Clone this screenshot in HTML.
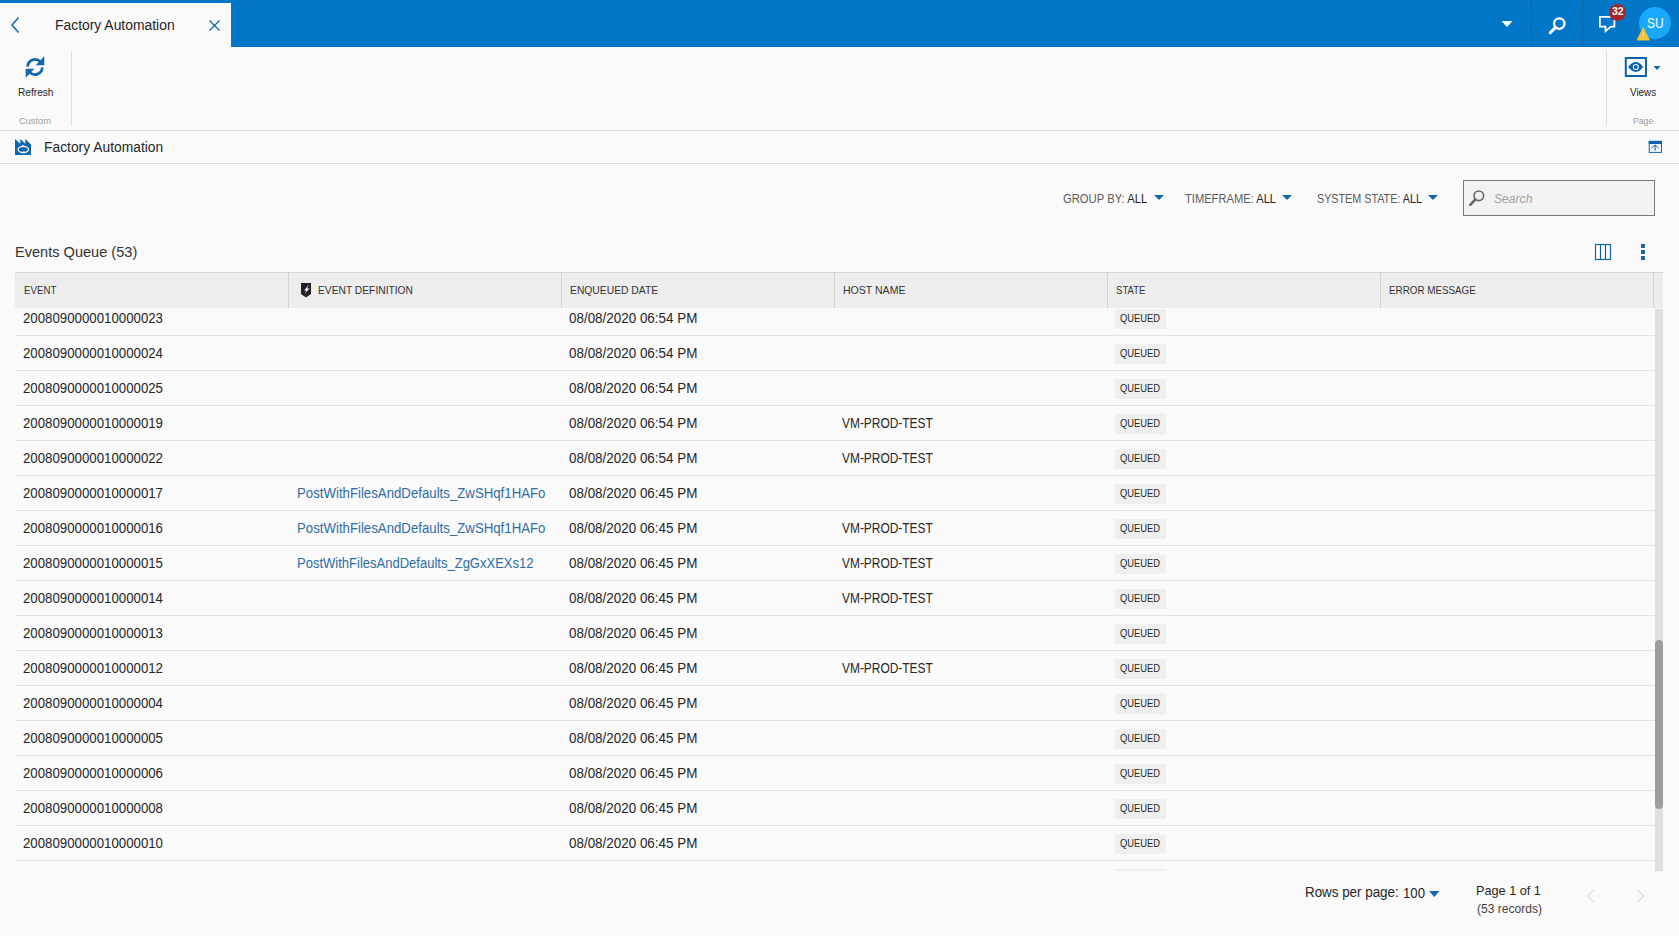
<!DOCTYPE html>
<html><head><meta charset="utf-8"><style>
*{margin:0;padding:0;box-sizing:border-box}
html,body{width:1679px;height:936px;overflow:hidden;background:#fafafa;font-family:"Liberation Sans",sans-serif;color:#222}
.t{position:absolute;line-height:1;white-space:pre;transform-origin:0 0}
.a{position:absolute}
.badge{position:absolute;width:51.4px;height:20px;background:#efefef}
.rl{position:absolute;left:0;width:1640px;height:1px;background:#e3e3e3}
.hdiv{position:absolute;top:273px;width:1px;height:35px;background:#d2d2d2}
</style></head><body>
<!-- top blue bar -->
<div class="a" style="left:0;top:0;width:1679px;height:47px;background:#0277c8"></div>
<div class="a" style="left:0;top:3px;width:231px;height:44px;background:#fafafa"></div>
<svg class="a" style="left:10px;top:16px" width="12" height="18" viewBox="0 0 12 18"><path d="M8.5 1.5 L2 9 L8.5 16.5" fill="none" stroke="#0f67b1" stroke-width="1.5"/></svg>
<svg class="a" style="left:208px;top:19px" width="13" height="13" viewBox="0 0 13 13"><path d="M1.5 1.5 L11.5 11.5 M11.5 1.5 L1.5 11.5" fill="none" stroke="#0f67b1" stroke-width="1.3"/></svg>
<!-- header right icons -->
<svg class="a" style="left:1501px;top:20px" width="12" height="8" viewBox="0 0 12 8"><path d="M0.5 1 L11.5 1 L6 7 Z" fill="#fff"/></svg>
<div class="a" style="left:1531px;top:0;width:0;height:47px;border-left:1px dashed #0b5d9e"></div>
<div class="a" style="left:1582px;top:0;width:0;height:47px;border-left:1px dashed #0b5d9e"></div>
<svg class="a" style="left:1547px;top:15.5px" width="20" height="20" viewBox="0 0 20 20"><circle cx="12.3" cy="7.6" r="5.2" fill="none" stroke="#fff" stroke-width="2.3"/><path d="M8.6 11.4 L3.2 16.8" stroke="#fff" stroke-width="3" stroke-linecap="round"/></svg>
<svg class="a" style="left:1598px;top:15px" width="20" height="20" viewBox="0 0 20 20"><path d="M1.9 1.9 H16.4 V11.6 H13 L7.5 16.2 V11.6 H1.9 Z" fill="none" stroke="#fff" stroke-width="1.75" stroke-linejoin="miter"/></svg>
<div class="a" style="left:1609px;top:3.5px;width:17px;height:17px;border-radius:50%;background:#a3262a"></div>
<div class="t" style="left:1611.60px;top:6.00px;font-size:10.5px;color:#ffffff;font-weight:bold;transform:scaleX(0.9967);">32</div>
<div class="a" style="left:1639px;top:6.8px;width:31.8px;height:32px;border-radius:50%;background:#18a8fc"></div>
<svg class="a" style="left:1636px;top:27px" width="15" height="14" viewBox="0 0 15 14"><path d="M7.25 1.2 L13 12.9 H1.5 Z" fill="#f5c330" stroke="#f5c330" stroke-width="1.3" stroke-linejoin="round"/><path d="M7.25 5.3 V9.6" stroke="#dfe6ee" stroke-width="1.1"/><rect x="6.7" y="10.6" width="1.1" height="1.2" fill="#dfe6ee"/></svg>

<!-- ribbon -->
<svg class="a" style="left:25px;top:56px" width="20" height="22" viewBox="0 0 20 22"><g fill="none" stroke="#1467ad" stroke-width="2.7"><path d="M2.7 10.6 A7.3 7.3 0 0 1 15.6 6.1"/><path d="M17.3 11.4 A7.3 7.3 0 0 1 4.4 15.9"/></g><path d="M19.3 0.2 V9.3 H10.6 Z" fill="#1467ad"/><path d="M0.7 21.8 V12.7 H9.4 Z" fill="#1467ad"/></svg>
<div class="a" style="left:71px;top:51px;width:1px;height:75px;background:#e0e0e0"></div>
<div class="a" style="left:1606px;top:51px;width:1px;height:75px;background:#e0e0e0"></div>
<svg class="a" style="left:1624px;top:57px" width="24" height="20" viewBox="0 0 24 20"><rect x="1.8" y="1" width="20.2" height="18" fill="none" stroke="#0d62ab" stroke-width="2"/><path d="M4.2 10 Q11.8 0.2 19.2 10 Q11.8 19.8 4.2 10 Z" fill="#0d62ab"/><circle cx="11.8" cy="10" r="3" fill="#fafafa"/><circle cx="11.8" cy="10" r="2" fill="#0d62ab"/></svg>
<svg class="a" style="left:1653px;top:65px" width="8" height="6" viewBox="0 0 8 6"><path d="M0.5 1 H7.5 L4 5 Z" fill="#1467ad"/></svg>
<div class="a" style="left:0;top:130px;width:1679px;height:1px;background:#dcdcdc"></div>
<!-- breadcrumb -->
<svg class="a" style="left:15px;top:139px" width="16" height="16" viewBox="0 0 16 16"><path d="M0 16 V0 L5.3 4.7 V0 L10.3 4.7 V0 L16 5.5 V16 Z" fill="#0f66ae"/><ellipse cx="8.3" cy="10.4" rx="5.2" ry="3.1" fill="none" stroke="#fff" stroke-width="1.3"/><path d="M7.2 6 L9.8 7.3 L7.2 8.6 Z M9.4 12.2 L6.8 13.5 L9.4 14.8 Z" fill="#fff"/></svg>
<svg class="a" style="left:1648px;top:140px" width="14" height="14" viewBox="0 0 14 14"><rect x="1.25" y="1.4" width="12.2" height="11" fill="none" stroke="#0d62ab" stroke-width="1"/><rect x="0.75" y="0.9" width="13.2" height="3.1" fill="#0d62ab"/><path d="M7.1 10.8 V5.2 M3.6 8.2 L7.1 4.9 L10.6 8.2" fill="none" stroke="#0d62ab" stroke-width="1"/></svg>
<div class="a" style="left:0;top:163px;width:1679px;height:1px;background:#dcdcdc"></div>

<!-- filters -->
<svg class="a" style="left:1153.5px;top:194.5px" width="10" height="5" viewBox="0 0 10 5"><path d="M0 0 H10 L5 5 Z" fill="#1467ad"/></svg>
<svg class="a" style="left:1282px;top:194.5px" width="10" height="5" viewBox="0 0 10 5"><path d="M0 0 H10 L5 5 Z" fill="#1467ad"/></svg>
<svg class="a" style="left:1428px;top:194.5px" width="10" height="5" viewBox="0 0 10 5"><path d="M0 0 H10 L5 5 Z" fill="#1467ad"/></svg>
<div class="a" style="left:1463px;top:180px;width:192px;height:36px;background:#f2f2f2;border:1.5px solid #7a7a7a"></div>
<svg class="a" style="left:1468px;top:189px" width="18" height="18" viewBox="0 0 18 18"><circle cx="10.8" cy="6.8" r="4.8" fill="none" stroke="#666" stroke-width="1.6"/><path d="M7.3 10.5 L2.2 15.8" stroke="#666" stroke-width="2.6" stroke-linecap="round"/></svg>

<!-- grid title icons -->
<svg class="a" style="left:1594px;top:243px" width="18" height="18" viewBox="0 0 18 18"><rect x="1.5" y="1.5" width="15" height="15" fill="none" stroke="#0d62ab" stroke-width="1.15"/><path d="M6.5 1.5 V16.5 M11.5 1.5 V16.5" stroke="#0d62ab" stroke-width="1.15"/></svg>
<div class="a" style="left:1641px;top:244px;width:4px;height:4px;background:#1467ad"></div>
<div class="a" style="left:1641px;top:250px;width:4px;height:4px;background:#1467ad"></div>
<div class="a" style="left:1641px;top:256px;width:4px;height:4px;background:#1467ad"></div>

<!-- grid header -->
<div class="a" style="left:15px;top:271.5px;width:1648px;height:1.5px;background:#d6d6d6"></div>
<div class="a" style="left:15px;top:273px;width:1648px;height:35px;background:#ededed"></div>
<div class="hdiv" style="left:288px"></div>
<div class="hdiv" style="left:561px"></div>
<div class="hdiv" style="left:834px"></div>
<div class="hdiv" style="left:1107px"></div>
<div class="hdiv" style="left:1380px"></div>
<div class="hdiv" style="left:1653px"></div>
<svg class="a" style="left:301px;top:283px" width="11" height="15" viewBox="0 0 11 15"><path d="M0 0 H10 V11 L5 14.5 L0 11 Z" fill="#231f20"/><path d="M8.2 1.2 L3.2 7.6 H5.6 L3.4 11.2 L8.4 5.4 H6 Z" fill="#fff"/></svg>

<!-- rows -->
<div class="a" style="left:15px;top:308px;width:1640px;height:563px;overflow:hidden">
<div class="t" style="left:8.20px;top:3.00px;font-size:14px;color:#262626;transform:scaleX(0.9463)">2008090000010000023</div><div class="t" style="left:554.00px;top:3.00px;font-size:14px;color:#262626;transform:scaleX(0.9586)">08/08/2020 06:54 PM</div><div class="badge" style="left:1099.6px;top:1px"></div><div class="t" style="left:1105.40px;top:6.00px;font-size:10px;color:#262626;transform:scaleX(0.9351)">QUEUED</div><div class="rl" style="top:27px"></div><div class="t" style="left:8.20px;top:38.00px;font-size:14px;color:#262626;transform:scaleX(0.9463)">2008090000010000024</div><div class="t" style="left:554.00px;top:38.00px;font-size:14px;color:#262626;transform:scaleX(0.9586)">08/08/2020 06:54 PM</div><div class="badge" style="left:1099.6px;top:36px"></div><div class="t" style="left:1105.40px;top:41.00px;font-size:10px;color:#262626;transform:scaleX(0.9351)">QUEUED</div><div class="rl" style="top:62px"></div><div class="t" style="left:8.20px;top:73.00px;font-size:14px;color:#262626;transform:scaleX(0.9463)">2008090000010000025</div><div class="t" style="left:554.00px;top:73.00px;font-size:14px;color:#262626;transform:scaleX(0.9586)">08/08/2020 06:54 PM</div><div class="badge" style="left:1099.6px;top:71px"></div><div class="t" style="left:1105.40px;top:76.00px;font-size:10px;color:#262626;transform:scaleX(0.9351)">QUEUED</div><div class="rl" style="top:97px"></div><div class="t" style="left:8.20px;top:108.00px;font-size:14px;color:#262626;transform:scaleX(0.9463)">2008090000010000019</div><div class="t" style="left:554.00px;top:108.00px;font-size:14px;color:#262626;transform:scaleX(0.9586)">08/08/2020 06:54 PM</div><div class="t" style="left:827.00px;top:108.00px;font-size:14px;color:#262626;transform:scaleX(0.8523)">VM-PROD-TEST</div><div class="badge" style="left:1099.6px;top:106px"></div><div class="t" style="left:1105.40px;top:111.00px;font-size:10px;color:#262626;transform:scaleX(0.9351)">QUEUED</div><div class="rl" style="top:132px"></div><div class="t" style="left:8.20px;top:143.00px;font-size:14px;color:#262626;transform:scaleX(0.9463)">2008090000010000022</div><div class="t" style="left:554.00px;top:143.00px;font-size:14px;color:#262626;transform:scaleX(0.9586)">08/08/2020 06:54 PM</div><div class="t" style="left:827.00px;top:143.00px;font-size:14px;color:#262626;transform:scaleX(0.8523)">VM-PROD-TEST</div><div class="badge" style="left:1099.6px;top:141px"></div><div class="t" style="left:1105.40px;top:146.00px;font-size:10px;color:#262626;transform:scaleX(0.9351)">QUEUED</div><div class="rl" style="top:167px"></div><div class="t" style="left:8.20px;top:178.00px;font-size:14px;color:#262626;transform:scaleX(0.9463)">2008090000010000017</div><div class="t" style="left:282.36px;top:178.00px;font-size:14px;color:#2e6da4;transform:scaleX(0.9447)">PostWithFilesAndDefaults_ZwSHqf1HAFo</div><div class="t" style="left:554.00px;top:178.00px;font-size:14px;color:#262626;transform:scaleX(0.9586)">08/08/2020 06:45 PM</div><div class="badge" style="left:1099.6px;top:176px"></div><div class="t" style="left:1105.40px;top:181.00px;font-size:10px;color:#262626;transform:scaleX(0.9351)">QUEUED</div><div class="rl" style="top:202px"></div><div class="t" style="left:8.20px;top:213.00px;font-size:14px;color:#262626;transform:scaleX(0.9463)">2008090000010000016</div><div class="t" style="left:282.36px;top:213.00px;font-size:14px;color:#2e6da4;transform:scaleX(0.9447)">PostWithFilesAndDefaults_ZwSHqf1HAFo</div><div class="t" style="left:554.00px;top:213.00px;font-size:14px;color:#262626;transform:scaleX(0.9586)">08/08/2020 06:45 PM</div><div class="t" style="left:827.00px;top:213.00px;font-size:14px;color:#262626;transform:scaleX(0.8523)">VM-PROD-TEST</div><div class="badge" style="left:1099.6px;top:211px"></div><div class="t" style="left:1105.40px;top:216.00px;font-size:10px;color:#262626;transform:scaleX(0.9351)">QUEUED</div><div class="rl" style="top:237px"></div><div class="t" style="left:8.20px;top:248.00px;font-size:14px;color:#262626;transform:scaleX(0.9463)">2008090000010000015</div><div class="t" style="left:282.37px;top:248.00px;font-size:14px;color:#2e6da4;transform:scaleX(0.9296)">PostWithFilesAndDefaults_ZgGxXEXs12</div><div class="t" style="left:554.00px;top:248.00px;font-size:14px;color:#262626;transform:scaleX(0.9586)">08/08/2020 06:45 PM</div><div class="t" style="left:827.00px;top:248.00px;font-size:14px;color:#262626;transform:scaleX(0.8523)">VM-PROD-TEST</div><div class="badge" style="left:1099.6px;top:246px"></div><div class="t" style="left:1105.40px;top:251.00px;font-size:10px;color:#262626;transform:scaleX(0.9351)">QUEUED</div><div class="rl" style="top:272px"></div><div class="t" style="left:8.20px;top:283.00px;font-size:14px;color:#262626;transform:scaleX(0.9463)">2008090000010000014</div><div class="t" style="left:554.00px;top:283.00px;font-size:14px;color:#262626;transform:scaleX(0.9586)">08/08/2020 06:45 PM</div><div class="t" style="left:827.00px;top:283.00px;font-size:14px;color:#262626;transform:scaleX(0.8523)">VM-PROD-TEST</div><div class="badge" style="left:1099.6px;top:281px"></div><div class="t" style="left:1105.40px;top:286.00px;font-size:10px;color:#262626;transform:scaleX(0.9351)">QUEUED</div><div class="rl" style="top:307px"></div><div class="t" style="left:8.20px;top:318.00px;font-size:14px;color:#262626;transform:scaleX(0.9463)">2008090000010000013</div><div class="t" style="left:554.00px;top:318.00px;font-size:14px;color:#262626;transform:scaleX(0.9586)">08/08/2020 06:45 PM</div><div class="badge" style="left:1099.6px;top:316px"></div><div class="t" style="left:1105.40px;top:321.00px;font-size:10px;color:#262626;transform:scaleX(0.9351)">QUEUED</div><div class="rl" style="top:342px"></div><div class="t" style="left:8.20px;top:353.00px;font-size:14px;color:#262626;transform:scaleX(0.9463)">2008090000010000012</div><div class="t" style="left:554.00px;top:353.00px;font-size:14px;color:#262626;transform:scaleX(0.9586)">08/08/2020 06:45 PM</div><div class="t" style="left:827.00px;top:353.00px;font-size:14px;color:#262626;transform:scaleX(0.8523)">VM-PROD-TEST</div><div class="badge" style="left:1099.6px;top:351px"></div><div class="t" style="left:1105.40px;top:356.00px;font-size:10px;color:#262626;transform:scaleX(0.9351)">QUEUED</div><div class="rl" style="top:377px"></div><div class="t" style="left:8.20px;top:388.00px;font-size:14px;color:#262626;transform:scaleX(0.9463)">2008090000010000004</div><div class="t" style="left:554.00px;top:388.00px;font-size:14px;color:#262626;transform:scaleX(0.9586)">08/08/2020 06:45 PM</div><div class="badge" style="left:1099.6px;top:386px"></div><div class="t" style="left:1105.40px;top:391.00px;font-size:10px;color:#262626;transform:scaleX(0.9351)">QUEUED</div><div class="rl" style="top:412px"></div><div class="t" style="left:8.20px;top:423.00px;font-size:14px;color:#262626;transform:scaleX(0.9463)">2008090000010000005</div><div class="t" style="left:554.00px;top:423.00px;font-size:14px;color:#262626;transform:scaleX(0.9586)">08/08/2020 06:45 PM</div><div class="badge" style="left:1099.6px;top:421px"></div><div class="t" style="left:1105.40px;top:426.00px;font-size:10px;color:#262626;transform:scaleX(0.9351)">QUEUED</div><div class="rl" style="top:447px"></div><div class="t" style="left:8.20px;top:458.00px;font-size:14px;color:#262626;transform:scaleX(0.9463)">2008090000010000006</div><div class="t" style="left:554.00px;top:458.00px;font-size:14px;color:#262626;transform:scaleX(0.9586)">08/08/2020 06:45 PM</div><div class="badge" style="left:1099.6px;top:456px"></div><div class="t" style="left:1105.40px;top:461.00px;font-size:10px;color:#262626;transform:scaleX(0.9351)">QUEUED</div><div class="rl" style="top:482px"></div><div class="t" style="left:8.20px;top:493.00px;font-size:14px;color:#262626;transform:scaleX(0.9463)">2008090000010000008</div><div class="t" style="left:554.00px;top:493.00px;font-size:14px;color:#262626;transform:scaleX(0.9586)">08/08/2020 06:45 PM</div><div class="badge" style="left:1099.6px;top:491px"></div><div class="t" style="left:1105.40px;top:496.00px;font-size:10px;color:#262626;transform:scaleX(0.9351)">QUEUED</div><div class="rl" style="top:517px"></div><div class="t" style="left:8.20px;top:528.00px;font-size:14px;color:#262626;transform:scaleX(0.9463)">2008090000010000010</div><div class="t" style="left:554.00px;top:528.00px;font-size:14px;color:#262626;transform:scaleX(0.9586)">08/08/2020 06:45 PM</div><div class="badge" style="left:1099.6px;top:526px"></div><div class="t" style="left:1105.40px;top:531.00px;font-size:10px;color:#262626;transform:scaleX(0.9351)">QUEUED</div><div class="rl" style="top:552px"></div><div class="badge" style="left:1099.6px;top:561px"></div><div class="t" style="left:1105.40px;top:566.00px;font-size:10px;color:#262626;transform:scaleX(0.9351)">QUEUED</div><div class="rl" style="top:587px"></div>
</div>
<!-- scrollbar -->
<div class="a" style="left:1655px;top:309px;width:8px;height:562px;background:#dfdfdf"></div>
<div class="a" style="left:1655px;top:640px;width:8px;height:169px;background:#9e9e9e;border-radius:4px"></div>

<!-- footer -->
<svg class="a" style="left:1428.5px;top:890.5px" width="10.5" height="6" viewBox="0 0 10.5 6"><path d="M0 0 H10.5 L5.25 6 Z" fill="#1467ad"/></svg>
<svg class="a" style="left:1586px;top:889px" width="9" height="14" viewBox="0 0 9 14"><path d="M7.5 1 L1.5 7 L7.5 13" fill="none" stroke="#d2e3e6" stroke-width="1.3"/></svg>
<svg class="a" style="left:1636px;top:889px" width="9" height="14" viewBox="0 0 9 14"><path d="M1.5 1 L7.5 7 L1.5 13" fill="none" stroke="#d2e3e6" stroke-width="1.3"/></svg>
<div class="t" style="left:54.71px;top:18.00px;font-size:14px;color:#262626;transform:scaleX(0.9916);">Factory Automation</div><div class="t" style="left:44.41px;top:140.00px;font-size:14px;color:#262626;transform:scaleX(0.9883);">Factory Automation</div><div class="t" style="left:17.80px;top:88.00px;font-size:10px;color:#262626;transform:scaleX(1.0130);">Refresh</div><div class="t" style="left:19.00px;top:116.00px;font-size:9.5px;color:#9c9c9c;transform:scaleX(0.9751);">Custom</div><div class="t" style="left:1629.80px;top:88.00px;font-size:10px;color:#262626;transform:scaleX(0.9889);">Views</div><div class="t" style="left:1633.00px;top:116.00px;font-size:9.5px;color:#9c9c9c;transform:scaleX(0.9131);">Page</div><div class="t" style="left:1063.00px;top:193.00px;font-size:12.5px;color:#5a5a5a;transform:scaleX(0.8992);">GROUP BY: <span style="color:#222">ALL</span></div><div class="t" style="left:1185.00px;top:193.00px;font-size:12.5px;color:#5a5a5a;transform:scaleX(0.8916);">TIMEFRAME: <span style="color:#222">ALL</span></div><div class="t" style="left:1317.30px;top:193.00px;font-size:12.5px;color:#5a5a5a;transform:scaleX(0.8610);">SYSTEM STATE: <span style="color:#222">ALL</span></div><div class="t" style="left:1494.00px;top:192.00px;font-size:13.3px;color:#a2a2a2;font-style:italic;transform:scaleX(0.9105);">Search</div><div class="t" style="left:14.76px;top:245.00px;font-size:14px;color:#333333;transform:scaleX(1.0402);">Events Queue (53)</div><div class="t" style="left:23.50px;top:285.00px;font-size:11.2px;color:#333333;transform:scaleX(0.8675);">EVENT</div><div class="t" style="left:317.50px;top:285.00px;font-size:11.2px;color:#333333;transform:scaleX(0.9169);">EVENT DEFINITION</div><div class="t" style="left:570.20px;top:285.00px;font-size:11.2px;color:#333333;transform:scaleX(0.9226);">ENQUEUED DATE</div><div class="t" style="left:843.30px;top:285.00px;font-size:11.2px;color:#333333;transform:scaleX(0.9418);">HOST NAME</div><div class="t" style="left:1116.00px;top:285.00px;font-size:11.2px;color:#333333;transform:scaleX(0.8547);">STATE</div><div class="t" style="left:1389.30px;top:285.00px;font-size:11.2px;color:#333333;transform:scaleX(0.8782);">ERROR MESSAGE</div><div class="t" style="left:1304.84px;top:885.00px;font-size:14px;color:#262626;transform:scaleX(0.9556);">Rows per page:</div><div class="t" style="left:1402.86px;top:886.00px;font-size:14px;color:#262626;transform:scaleX(0.9392);">100</div><div class="t" style="left:1476.22px;top:884.00px;font-size:13px;color:#262626;transform:scaleX(0.9760);">Page 1 of 1</div><div class="t" style="left:1476.70px;top:903.00px;font-size:12px;color:#444444;transform:scaleX(1.0063);">(53 records)</div><div class="t" style="left:1646.75px;top:16.00px;font-size:14px;color:#ffffff;transform:scaleX(0.8532);">SU</div>
</body></html>
